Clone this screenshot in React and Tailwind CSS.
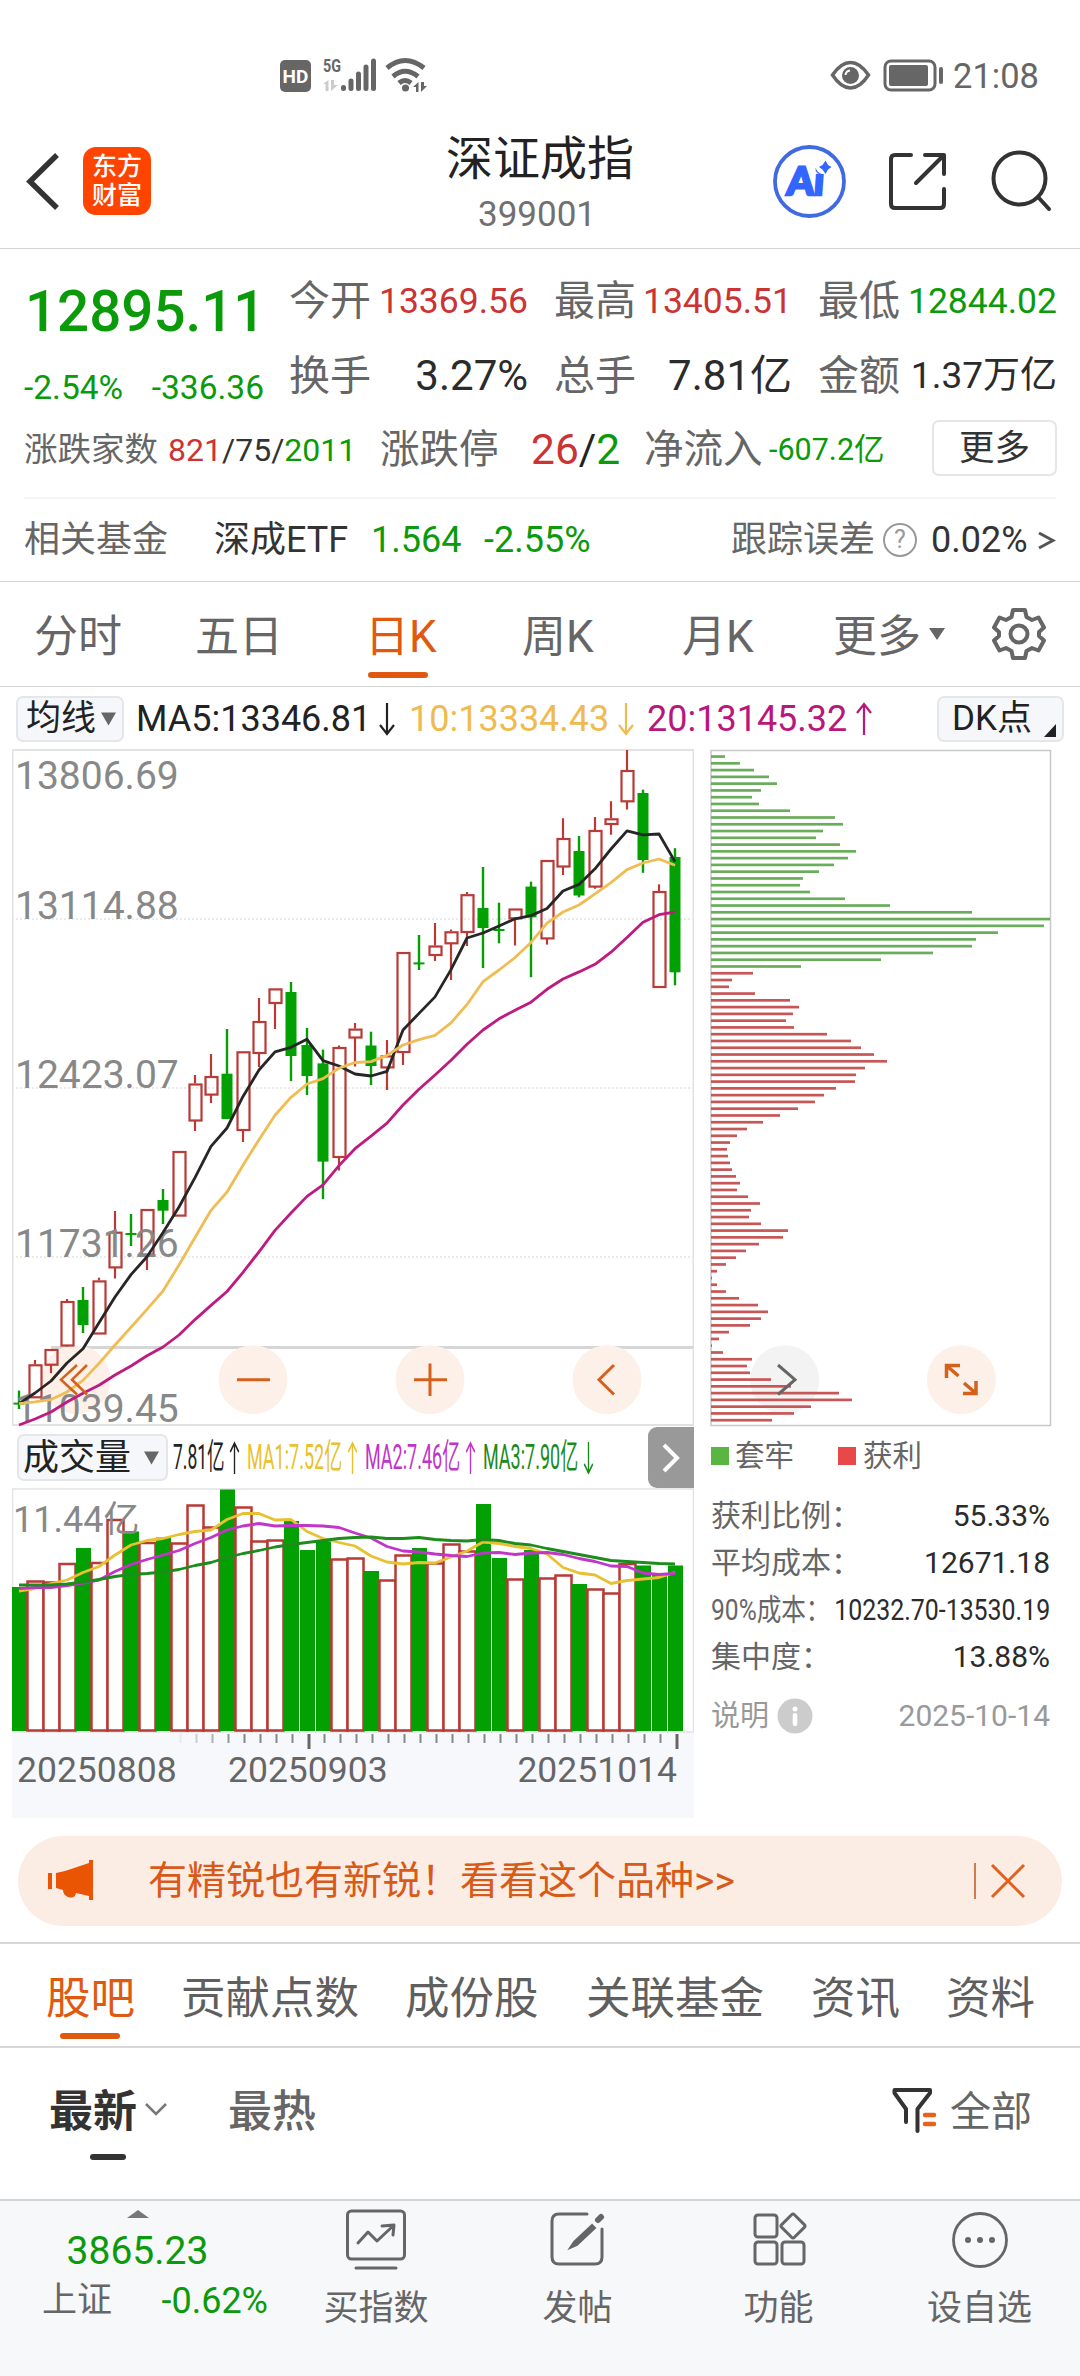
import React from 'react';

// [high, body top, body bottom, low, direction], px from the top of the chart
const candles = [
  [640.6, 653.6, 653.6, 659, 'd'], [610, 614.3, 647.3, 647.3, 'u'], [599, 599, 614.7, 623.2, 'u'],
  [549, 551, 595.5, 596.4, 'u'], [537, 550, 575, 583, 'd'], [527.7, 530.4, 583.5, 583.5, 'u'],
  [461, 481.7, 517.4, 528.6, 'u'], [464, 484, 484, 496, 'd'], [459, 459, 504.5, 520, 'u'],
  [439, 450, 460.7, 474, 'd'], [401, 401, 465.6, 465.6, 'u'], [325, 333.5, 370.5, 381, 'u'],
  [304, 326, 344.6, 353, 'u'], [279, 323.7, 369, 369, 'd'], [301.3, 301.3, 380, 392, 'u'],
  [248, 271, 303, 317, 'u'], [238.4, 238.4, 253, 279, 'u'], [232, 242, 306, 331, 'd'],
  [278, 295, 326, 345, 'd'], [299.6, 313.4, 411.6, 449, 'd'], [295.5, 297, 407, 420.5, 'u'],
  [273, 278.6, 287.5, 316.5, 'u'], [281.7, 295.5, 316, 335, 'd'], [290, 305.4, 317.4, 340, 'u'],
  [202, 202, 302, 315, 'u'], [185, 213.4, 213.4, 220, 'd'], [173, 195.5, 205, 211, 'u'],
  [179.5, 181.3, 193.3, 230, 'u'], [142, 144.2, 182, 196, 'u'], [117, 158, 178, 218, 'd'],
  [152.7, 180, 180, 193.3, 'd'], [158.5, 158.5, 168.3, 195.5, 'u'], [131.7, 136.6, 167.4, 227.2, 'd'],
  [110, 110, 188.4, 194.6, 'u'], [68.3, 88, 116.5, 125, 'u'], [86, 101, 145.5, 147.3, 'd'],
  [67, 80, 136.6, 138.8, 'u'], [51.3, 68.3, 74, 84.8, 'u'], [0, 20, 51.3, 59.4, 'u'],
  [39.7, 43, 110, 122.8, 'd'], [134.4, 141, 237, 237, 'u'], [98.2, 107, 222.3, 235.3, 'd'],
];

const ma5 = [653.6, 643, 631, 613, 598.7, 572.8, 547, 524.6, 506.7, 482.6, 457, 427.7, 396.4, 378, 346.4, 320, 301.8, 297.3, 289.3, 310.7, 316, 324, 326, 321.4, 280, 263.4, 246.9, 219.6, 188, 183, 176, 168.8, 165.6, 158.5, 141, 134.4, 118.8, 99, 80.8, 84.8, 84, 111.6];
const ma10 = [653.6, 651.8, 649.6, 642, 630.4, 613.4, 595, 577.2, 559.4, 541, 515, 487.5, 460.3, 442, 415.2, 389.7, 365.2, 347.3, 334, 328.6, 318.3, 312.5, 311.6, 305.4, 295, 289.7, 285.3, 272.8, 254.5, 231.7, 220, 207.6, 192.4, 173.2, 162, 155, 143.8, 132.6, 119.6, 113, 109, 115.2];
const ma20 = [675, 669, 662, 652, 643.3, 635.3, 625, 616, 605.8, 597, 585, 569.6, 555.4, 541.5, 522.3, 501.8, 480.4, 463, 446.4, 434.8, 415.6, 398.7, 386.2, 373.2, 355, 339.3, 325, 310.3, 294.2, 280, 268.8, 260.3, 252.2, 239.3, 229, 221.9, 214.3, 202.2, 187.5, 172.3, 164.7, 162];

const volumes = [98, 91.5, 92.5, 74, 59, 73, 30, 42.5, 53, 48.5, 53.5, 15.5, 37.5, 0.5, 17.5, 51.5, 50.5, 32, 61, 51.5, 69.5, 68.5, 82, 90.5, 65.5, 59, 73.5, 54.5, 61.5, 15, 69, 89.5, 61, 88.5, 85.5, 95, 99.5, 103.5, 74, 76.5, 86, 76.5];
const volumeDown = [0, 4, 7, 9, 13, 17, 18, 19, 22, 25, 29, 30, 32, 35, 39, 40, 41];
const vma1 = [102, 99.5, 94.5, 91, 83.5, 77.5, 66, 56, 51.5, 49.5, 45.5, 42.5, 41, 30.5, 24.5, 24.5, 31, 30.5, 42.5, 49.5, 53.5, 57, 67, 73, 75, 73.5, 74, 68, 62, 53, 54.5, 57.5, 59.5, 65, 78.5, 84, 86, 94.5, 91.5, 90, 88.5, 83.5];
const vma2 = [99.5, 98.5, 98.5, 96.5, 94, 91, 82.5, 75.5, 70.5, 66, 61.5, 54.5, 48.5, 41, 37, 34.5, 37, 36.5, 36.5, 37, 38.5, 44, 49, 57.5, 62, 63, 65, 66.5, 67.5, 64, 63.5, 65.5, 64, 63.5, 65.5, 69.5, 72.5, 77, 77.5, 84, 85.5, 84.5];
const vma3 = [96, 96, 96, 95, 93, 90.5, 87.5, 85.5, 84.5, 83, 80.5, 76.5, 73.5, 68.5, 64.5, 61.5, 58, 55.5, 53.5, 51.5, 49.5, 48.5, 48, 49.5, 49.5, 48.5, 50.5, 51.5, 52, 50.5, 51.5, 54.5, 56, 59.5, 62.5, 65.5, 68.5, 71.5, 72.5, 73.5, 74.5, 75];

const trapped = [14, 29, 43, 58, 66, 50, 41, 48, 79, 124, 132, 112, 105, 129, 145, 137, 123, 108, 92, 89, 99, 134, 179, 261, 339, 333, 287, 265, 261, 222, 170, 90];
const profit = [42, 21, 18, 44, 79, 88, 82, 75, 83, 116, 140, 150, 163, 176, 154, 145, 144, 125, 113, 104, 87, 69, 52, 36, 26, 19, 16, 17, 19, 21, 25, 29, 26, 37, 49, 40, 38, 50, 77, 72, 48, 35, 25, 15, 6, 1, 6, 15, 28, 47, 57, 50, 39, 18, 8, 1, 12, 41, 36, 39, 60, 80, 128, 141, 100, 83, 61];

const xAt = (i) => 7 + i * 16;
const toPoints = (values) => values.map((y, i) => `${xAt(i)},${y}`).join(' ');

const Arrow = ({ up, color, width = 18, height = 34 }) => (
  <svg width={width} height={height} viewBox="0 0 18 34" preserveAspectRatio="none" fill="none" stroke={color} strokeWidth="2.2" className="shrink-0">
    {up ? <path d="M9 33V2M2 11L9 2L16 11" /> : <path d="M9 1V32M2 23L9 32L16 23" />}
  </svg>
);

const StatusBar = () => (
  <div className="flex h-[100px] shrink-0 items-start pt-[56px]">
    <svg width="160" height="38" viewBox="0 0 160 38" className="ml-[278px]">
      <rect x="2" y="4" width="31" height="32" rx="5" fill="#666" />
      <text x="17.5" y="26.5" fontSize="19" fontWeight="700" fill="#fff" textAnchor="middle">HD</text>
      <text x="45" y="15.5" fontSize="19" fontWeight="700" fill="#666" textLength="18" lengthAdjust="spacingAndGlyphs">5G</text>
      <path d="M45 28L50.5 24V35H47.5V28ZM53 24V35L60 29H56V24Z" fill="#ccc" />
      <path d="M65.5 31.5V32.5M73 25V32.5M80.5 18V32.5M88 11V32.5M95.5 5V32.5" stroke="#666" strokeWidth="5" strokeLinecap="round" />
      <path d="M109 12Q127 -3 146 12M115 20.5Q127 10 140 20.5M121 27Q127 22 133 27" stroke="#666" strokeWidth="5" fill="none" />
      <circle cx="127.5" cy="32" r="3.5" fill="#666" />
      <path d="M135 31L140.5 26V36H138V31ZM143 26V36L149 30H146V26Z" fill="#666" />
    </svg>
    <svg width="120" height="38" viewBox="0 0 120 38" className="ml-[391px]">
      <path d="M3.5 19Q12 6.5 21.5 6.5T39.5 19Q31 32 21.5 32T3.5 19Z" fill="none" stroke="#666" strokeWidth="3.5" />
      <circle cx="21.5" cy="19.5" r="8.5" fill="#666" />
      <path d="M16.5 19Q17 15 21 14.5" stroke="#fff" strokeWidth="2" fill="none" />
      <rect x="56" y="5" width="50" height="29" rx="6" fill="none" stroke="#666" strokeWidth="3" />
      <rect x="60" y="9" width="39" height="21" rx="2" fill="#666" />
      <rect x="110" y="11" width="4" height="17" rx="2" fill="#666" />
    </svg>
    <span className="ml-[4px] mt-[1px] text-[34.5px] leading-[38px] text-[#666]">21:08</span>
  </div>
);

const Header = () => (
  <div className="flex h-[149px] shrink-0 items-start border-b border-[#d4d4d4]">
    <div className="flex w-[360px] items-center pt-[47px] pl-[24px]">
      <svg width="36" height="68" viewBox="0 0 36 68" fill="none" stroke="#333" strokeWidth="5.5">
        <path d="M33 8L6 34.5L33 61" />
      </svg>
      <div className="ml-[23px] flex h-[68px] w-[68px] flex-col items-center justify-center rounded-[13px] bg-[#ff4400] text-[25px] font-medium leading-[29px] text-white">
        <span>东方</span>
        <span>财富</span>
      </div>
    </div>
    <div className="flex w-[360px] flex-col items-center pt-[33px]">
      <h1 className="text-[47px] leading-[52px] text-[#222]">深证成指</h1>
      <span className="mt-[12px] -ml-[6px] text-[35px] leading-[36px] text-[#707070]">399001</span>
    </div>
    <div className="flex w-[360px] pt-[43px] pl-[51px]">
      <svg width="76" height="76" viewBox="0 0 76 76">
        <circle cx="38.5" cy="38.5" r="34.5" fill="none" stroke="#4169e1" strokeWidth="3.8" />
        <text x="16" y="52.5" fontSize="39" fontWeight="900" fill="#3366ff" stroke="#3366ff" strokeWidth="2.5" className="font-['Lato']" transform="skewX(-4) translate(3 0)" textLength="37" lengthAdjust="spacingAndGlyphs">Ai</text>
        <circle cx="52.5" cy="23" r="8" fill="#fff" />
        <path d="M54.5 17.5L57 22L60.5 24L57 26.5L54.5 31L51.5 26.5L48 24L51.5 22Z" fill="#3366ff" />
      </svg>
      <svg width="64" height="76" viewBox="0 0 64 76" className="ml-[38px]" fill="none" stroke="#333" strokeWidth="4" strokeLinecap="round" strokeLinejoin="round">
        <path d="M26 12H10Q6 12 6 16V61Q6 65 10 65H55Q59 65 59 61V46M40 12H59V31M59 12L31 40" />
      </svg>
      <svg width="68" height="76" viewBox="0 0 68 76" className="ml-[38px]" fill="none" stroke="#333" strokeWidth="4" strokeLinecap="round">
        <circle cx="32.5" cy="35.5" r="26" />
        <path d="M51 54L62 66" />
      </svg>
    </div>
  </div>
);

const Quote = () => (
  <div className="flex h-[333px] shrink-0 flex-col border-b border-[#d4d4d4] whitespace-nowrap">
    <div className="flex h-[156px]">
      <div className="w-[265px] pt-[32px] pl-[25px] text-[#0a9a0a]">
        <div className="text-[56.5px] font-medium leading-[63px]">12895.11</div>
        <div className="mt-[26px] -ml-[1px] flex justify-between pr-[1px] text-[33.5px] leading-[36px]">
          <span>-2.54%</span>
          <span>-336.36</span>
        </div>
      </div>
      <div className="flex flex-col gap-[35px] pt-[32px] pl-[24px] text-[41px] leading-[40px] text-[#666]">
        <div className="flex gap-[26px]">
          <div className="flex w-[239px] items-center justify-between"><span>今开</span><span className="text-[35.5px] text-[#cc3333]">13369.56</span></div>
          <div className="flex w-[238px] items-center justify-between"><span>最高</span><span className="text-[35.5px] text-[#cc3333]">13405.51</span></div>
          <div className="flex w-[239px] items-center justify-between"><span>最低</span><span className="text-[35.5px] text-[#0a9a0a]">12844.02</span></div>
        </div>
        <div className="flex gap-[26px]">
          <div className="flex w-[239px] items-center justify-between"><span>换手</span><span className="text-[42px] text-[#2b2b2b]">3.27%</span></div>
          <div className="flex w-[238px] items-center justify-between"><span>总手</span><span className="text-[42px] text-[#2b2b2b]">7.81亿</span></div>
          <div className="flex w-[239px] items-center justify-between"><span>金额</span><span className="text-[37px] text-[#2b2b2b]">1.37万亿</span></div>
        </div>
      </div>
    </div>
    <div className="mt-[15px] flex h-[56px] items-center pl-[24px] text-[#666]">
      <span className="mt-[4px] w-[144px] text-[33.5px]">涨跌家数</span>
      <span className="mt-[3px] w-[212px] text-[32px] text-[#333]"><span className="text-[#cc3333]">821</span>/75/<span className="text-[#0a9a0a]">2011</span></span>
      <span className="mt-[4px] w-[151px] text-[39.5px]">涨跌停</span>
      <span className="mt-[4px] w-[113px] text-[42.5px] text-[#222]"><span className="text-[#cc3333]">26</span>/<span className="text-[#0a9a0a]">2</span></span>
      <span className="mt-[4px] w-[125px] text-[39.5px]">净流入</span>
      <span className="mt-[3px] w-[163px] text-[30.5px] text-[#0a9a0a]">-607.2亿</span>
      <button className="h-[56px] w-[125px] rounded-[7px] border-2 border-[#e6e6e6] text-[35.5px] leading-[52px] text-[#333]">更多</button>
    </div>
    <div className="mx-[24px] mt-[21px] h-[2px] bg-[#f4f4f4]"></div>
    <div className="flex h-[82px] items-center pl-[24px] text-[36px] text-[#666]">
      <span className="w-[190px]">相关基金</span>
      <span className="w-[157px] text-[#333]">深成ETF</span>
      <span className="w-[113px] text-[#0a9a0a]">1.564</span>
      <span className="w-[247px] text-[#0a9a0a]">-2.55%</span>
      <span className="w-[152px]">跟踪误差</span>
      <span className="flex h-[34px] w-[34px] items-center justify-center rounded-full border-[2.5px] border-[#999] text-[25px] text-[#999]">?</span>
      <span className="ml-[14px] w-[107px] text-[36px] text-[#333]">0.02%</span>
      <svg width="18" height="26" viewBox="0 0 18 26" fill="none" stroke="#555" strokeWidth="3"><path d="M1 6L15 13.5L1 21" /></svg>
    </div>
  </div>
);

const ChartTabs = () => (
  <div className="flex h-[105px] shrink-0 items-center border-b border-[#d4d4d4] pt-[5px] pl-[34px] text-[44px] leading-[50px] whitespace-nowrap text-[#666]">
    <span className="w-[161px]">分时</span>
    <span className="w-[170px]">五日</span>
    <span className="w-[157px] text-[#df5a10]">日K</span>
    <span className="w-[160px]">周K</span>
    <span className="w-[151px]">月K</span>
    <span>更多</span>
    <svg width="16" height="14" viewBox="0 0 16 14" className="mb-[5px] ml-[8px]"><path d="M0 1H16L8 13Z" fill="#666" /></svg>
    <svg width="54" height="54" viewBox="0 0 54 54" className="mb-[5px] ml-[47px]" fill="none" stroke="#666" strokeWidth="4" strokeLinejoin="round">
      <path d="M21 3H33L34.5 10L40 13L46.5 10.5L52 20.5L47 25V29L52 33.5L46.5 43.5L40 41L34.5 44L33 51H21L19.5 44L14 41L7.5 43.5L2 33.5L7 29V25L2 20.5L7.5 10.5L14 13L19.5 10Z" />
      <circle cx="27" cy="27" r="8.5" />
    </svg>
  </div>
);

const MaRow = () => (
  <div className="flex h-[62px] shrink-0 items-center pt-[1px] pl-[16px] text-[36px] leading-[44px] whitespace-nowrap">
    <div className="flex h-[46px] w-[108px] items-center rounded-[7px] border-2 border-[#e4e6ea] bg-[#f6f7fa] pl-[8px] text-[35px] text-[#222]">
      均线
      <svg width="15" height="14" viewBox="0 0 16 14" className="ml-[5px]"><path d="M0 0H16L8 14Z" fill="#666" /></svg>
    </div>
    <span className="ml-[12px] w-[242px] text-[#222]">MA5:13346.81</span>
    <Arrow color="#222" />
    <span className="ml-[13px] w-[208px] text-[#efbb50]">10:13334.43</span>
    <Arrow color="#efbb50" />
    <span className="ml-[12px] w-[208px] text-[#b8177c]">20:13145.32</span>
    <Arrow up color="#b8177c" />
    <div className="ml-[64px] flex h-[46px] w-[127px] items-center rounded-[7px] border-2 border-[#e4e6ea] bg-[#f6f7fa] pl-[13px] text-[35px] text-[#222]">
      DK点
      <svg width="12" height="13" viewBox="0 0 12 13" className="mt-[24px] ml-[12px]"><path d="M12 0V13H0Z" fill="#222" /></svg>
    </div>
  </div>
);

const RED = '#b93a36';
const GREEN = '#03a003';

const KLine = () => (
  <svg width="683" height="678" viewBox="0 -1 683 678" className="block">
    <rect x="0.5" y="0" width="681" height="675" fill="none" stroke="#e2e2e2" strokeWidth="2" />
    {[169, 338, 507].map((y) => (
      <line key={y} x1="0" x2="681" y1={y} y2={y} stroke="#e4e4e4" strokeWidth="1.5" strokeDasharray="2 2" />
    ))}
    <line x1="39" x2="681" y1="597.5" y2="597.5" stroke="#d6d6d6" strokeWidth="3" />
    {[64, 241, 418, 595].map((x) => (
      <circle key={x} cx={x} cy="629.7" r="34.5" fill="#fdf0e8" />
    ))}
    {candles.map(([high, top, bottom, low, dir], i) => {
      const x = xAt(i);
      if (dir === 'd') {
        return (
          <g key={i} fill={GREEN}>
            <rect x={x - 1.2} y={high} width="2.4" height={low - high} />
            <rect x={x - 5.5} y={bottom - top < 1 ? top - 1 : top} width="11" height={Math.max(bottom - top, 2)} />
          </g>
        );
      }
      return (
        <g key={i} fill="none" stroke={RED} strokeWidth="2.2">
          <path d={`M${x} ${high}V${top}M${x} ${bottom}V${low}`} />
          <rect x={x - 5.5} y={top + 1} width="12" height={Math.max(bottom - top - 1, 2)} />
        </g>
      );
    })}
    <g fontSize="39" fill="#888">
      <text x="3" y="38.5">13806.69</text>
      <text x="3" y="169">13114.88</text>
      <text x="3" y="338">12423.07</text>
      <text x="3" y="507">11731.26</text>
      <text x="3" y="672">11039.45</text>
    </g>
    <g fill="none" strokeWidth="2.8" strokeLinejoin="round">
      <polyline points={toPoints(ma5)} stroke="#262626" />
      <polyline points={toPoints(ma10)} stroke="#f0bc54" />
      <polyline points={toPoints(ma20)} stroke="#be1b80" />
    </g>
    <g fill="none" stroke="#d4601c" strokeWidth="3">
      <path d="M65 615L49 629.7L65 644.5M75 615L60 629.7L75 644.5" strokeWidth="2.5" />
      <path d="M225 629.7H258" />
      <path d="M402 629.7H435M418 613.5V646" />
      <path d="M602 615L587 629.7L602 644.5" />
    </g>
  </svg>
);

const VolumeRow = () => (
  <div className="flex h-[61px] items-center pl-[5px] whitespace-nowrap">
    <div className="flex h-[47px] w-[151px] shrink-0 items-center rounded-[7px] border-2 border-[#e4e6ea] bg-[#f6f7fa] pl-[4px] text-[36px] leading-[42px] text-[#222]">
      成交量
      <svg width="15" height="14" viewBox="0 0 16 14" className="ml-[13px]"><path d="M0 0H16L8 14Z" fill="#666" /></svg>
    </div>
    <div className="flex items-center pl-[5px] text-[35px] leading-[40px]">
      <div className="w-[56px] text-[#222]"><span className="inline-block origin-left scale-x-[0.5]">7.81亿</span></div>
      <Arrow up color="#222" width={11} />
      <div className="ml-[7px] w-[100px] text-[#e8c12c]"><span className="inline-block origin-left scale-x-[0.514]">MA1:7.52亿</span></div>
      <Arrow up color="#e8c12c" width={11} />
      <div className="ml-[7px] w-[100px] text-[#c034c8]"><span className="inline-block origin-left scale-x-[0.514]">MA2:7.46亿</span></div>
      <Arrow up color="#c034c8" width={11} />
      <div className="ml-[7px] w-[100px] text-[#1a8a1a]"><span className="inline-block origin-left scale-x-[0.514]">MA3:7.90亿</span></div>
      <Arrow color="#1a8a1a" width={11} />
    </div>
    <div className="ml-auto flex h-[61px] w-[46px] shrink-0 items-center justify-center rounded-l-[9px] bg-[#999]">
      <svg width="20" height="32" viewBox="0 0 20 32" fill="none" stroke="#fff" strokeWidth="4"><path d="M3 3L16 16L3 29" /></svg>
    </div>
  </div>
);

const VolumeChart = () => (
  <svg width="683" height="330" viewBox="0 -1 683 330" className="block">
    <rect x="0" y="244" width="682" height="85" fill="#f7f8fb" />
    <rect x="0.5" y="0" width="681" height="243" fill="none" stroke="#e2e2e2" strokeWidth="1.5" />
    {volumes.map((y, i) =>
      volumeDown.includes(i) ? (
        <rect key={i} x={xAt(i) - 7} y={y} width="15" height={242 - y} fill={GREEN} />
      ) : (
        <rect key={i} x={xAt(i) - 7.5} y={y + 1} width="16" height={240.5 - y} fill="#fff" stroke={RED} strokeWidth="2.5" />
      )
    )}
    <text x="1" y="43" fontSize="36" fill="#888">11.44亿</text>
    <g fill="none" strokeWidth="2.8" strokeLinejoin="round">
      <polyline points={toPoints(vma1)} stroke="#e8c133" />
      <polyline points={toPoints(vma2)} stroke="#c136c8" />
      <polyline points={toPoints(vma3)} stroke="#1d8c1d" />
    </g>
    {Array.from({ length: 32 }, (_, n) => n + 10).map((i) => {
      const major = i === 18 || i === 41;
      return (
        <rect key={i} x={xAt(i) + 0.5} y="245" width={major ? 3 : 2} height={major ? 15 : 9} fill={major ? '#666' : '#888'} opacity={Math.min(1, (i - 9.5) / 4)} />
      );
    })}
    <g fontSize="35.5" fill="#666">
      <text x="5" y="292.5">20250808</text>
      <text x="216" y="292.5">20250903</text>
      <text x="665" y="292.5" textAnchor="end">20251014</text>
    </g>
  </svg>
);

const ChipChart = () => (
  <svg width="342" height="678" viewBox="0 -1 342 678" className="block">
    <rect x="1" y="0.5" width="339.5" height="675" fill="none" stroke="#c8c8c8" strokeWidth="1.5" />
    <circle cx="74.7" cy="629.7" r="34.5" fill="#f3f3f3" />
    {trapped.map((w, i) => (
      <rect key={i} x="1" y={5.2 + i * 6.772} width={w} height="2.7" fill="#69ad5b" />
    ))}
    {profit.map((w, i) => (
      <rect key={i} x="1" y={5.2 + (i + 32) * 6.772} width={w} height="2.7" fill="#c75656" />
    ))}
    <path d="M68 615L85 629.7L68 644.5" fill="none" stroke="#666" strokeWidth="3" />
    <circle cx="251.3" cy="629.7" r="34.5" fill="#fdf0e8" />
    <g fill="none" stroke="#d4601c" strokeWidth="3.5">
      <path d="M236.5 628V615.5H250M237 616L248.5 626M266 631V643.5H253M265.5 643L254 633" />
    </g>
  </svg>
);

const ChipStats = () => (
  <div className="flex flex-col whitespace-nowrap text-[30px] leading-[40px] text-[#666]">
    <div className="mt-[8px] flex h-[42px] items-center">
      <span className="ml-[1px] h-[18px] w-[18px] bg-[#59b643]"></span>
      <span className="ml-[6px] w-[103px] text-[29.5px]">套牢</span>
      <span className="h-[18px] w-[18px] bg-[#e84848]"></span>
      <span className="ml-[7px] text-[29.5px]">获利</span>
    </div>
    <div className="mt-[15px] flex h-[47px] w-[340px] items-center justify-between"><span className="pl-[1px]">获利比例：</span><span className="text-[#2b2b2b]">55.33%</span></div>
    <div className="flex h-[47px] w-[340px] items-center justify-between"><span className="pl-[1px]">平均成本：</span><span className="text-[#2b2b2b]">12671.18</span></div>
    <div className="flex h-[47px] w-[340px] items-center justify-between pl-[1px]">
      <div className="w-[119px]"><span className="inline-block origin-left scale-x-[0.82]">90%成本：</span></div>
      <div className="flex w-[218px] justify-end text-[#2b2b2b]"><span className="inline-block origin-right scale-x-[0.83]">10232.70-13530.19</span></div>
    </div>
    <div className="flex h-[47px] w-[340px] items-center justify-between"><span className="pl-[1px]">集中度：</span><span className="text-[#2b2b2b]">13.88%</span></div>
    <div className="mt-[13px] flex h-[46px] w-[340px] items-center text-[#999]">
      <span className="pl-[1px] text-[29px]">说明</span>
      <svg width="36" height="36" viewBox="0 0 36 36" className="ml-[8px]">
        <circle cx="18" cy="18" r="17.5" fill="#ccc" />
        <circle cx="18" cy="11" r="2.5" fill="#fff" />
        <rect x="15.7" y="15" width="4.6" height="13" rx="2" fill="#fff" />
      </svg>
      <span className="ml-auto">2025-10-14</span>
    </div>
  </div>
);

const Banner = () => (
  <div className="mx-[18px] mt-[18px] flex h-[90px] shrink-0 items-center rounded-full bg-[#fbede4] text-[39px] text-[#d85a18]">
    <svg width="48" height="42" viewBox="0 0 48 42" className="ml-[29px]" fill="#ea5504">
      <rect x="1" y="13" width="4" height="16" />
      <path d="M9 13L18 11L42 3V0H46V40H42V36L29 33Q28 39 21 37Q16 35 16 30L9 28Z" />
    </svg>
    <span className="ml-[53px] whitespace-nowrap">有精锐也有新锐！看看这个品种&gt;&gt;</span>
    <div className="ml-auto h-[36px] w-[2px] bg-[#cf7c50]"></div>
    <svg width="36" height="36" viewBox="0 0 36 36" className="mr-[36px] ml-[14px]" fill="none" stroke="#e0601c" strokeWidth="3">
      <path d="M2 2L34 34M34 2L2 34" />
    </svg>
  </div>
);

const InfoTabs = () => (
  <div className="mt-[16px] flex h-[106px] shrink-0 items-center border-y-2 border-[#d8d8d8] pt-[7px] pl-[46px] text-[44.5px] leading-[52px] whitespace-nowrap text-[#5f5f5f]">
    <div className="w-[135px] text-[#df5a10]">股吧</div>
    <div className="w-[224px]">贡献点数</div>
    <div className="w-[181px]">成份股</div>
    <div className="w-[225px]">关联基金</div>
    <div className="w-[135px]">资讯</div>
    <div>资料</div>
  </div>
);

const SortRow = () => (
  <div className="flex h-[151px] shrink-0 flex-col">
    <div className="mt-[34px] flex h-[56px] items-center text-[44px] leading-[52px] whitespace-nowrap text-[#666]">
      <span className="mt-[4px] ml-[49px] font-bold text-[#333]">最新</span>
      <svg width="24" height="14" viewBox="0 0 24 14" className="ml-[7px]" fill="none" stroke="#777" strokeWidth="2.5"><path d="M2 1L12 11L22 1" /></svg>
      <span className="mt-[4px] ml-[60px] font-medium">最热</span>
      <svg width="46" height="48" viewBox="0 0 46 48" className="ml-auto" fill="none" stroke="#333" strokeWidth="4" strokeLinejoin="round" strokeLinecap="round">
        <path d="M14 36V23L2.5 7V4H38V7L25.5 23V45" />
        <path d="M33 29H42M33 38H42" stroke="#e8621c" strokeWidth="4.5" />
      </svg>
      <span className="mt-[3px] mr-[48px] ml-[12px] text-[41px]">全部</span>
    </div>
    <div className="mt-[16px] ml-[90px] h-[6px] w-[36px] rounded-full bg-[#333]"></div>
  </div>
);

const BottomNav = () => (
  <div className="flex h-[177px] shrink-0 border-t-2 border-[#d4d4d4] bg-[#f7f8fa] text-[35px] leading-[40px] whitespace-nowrap text-[#666]">
    <div className="flex w-[275px] flex-col items-center">
      <svg width="22" height="8" viewBox="0 0 22 8" className="mt-[9px]"><path d="M11 0L22 8H0Z" fill="#777" /></svg>
      <span className="mt-[12px] text-[39px] leading-[42px] text-[#0a9a0a]">3865.23</span>
      <div className="mt-[9px] ml-[42px] flex w-[226px] items-center justify-between self-start">
        <span>上证</span>
        <span className="text-[36px] text-[#0a9a0a]">-0.62%</span>
      </div>
    </div>
    <div className="flex w-[202px] flex-col items-center pt-[6px]">
      <svg width="64" height="64" viewBox="0 0 64 64" fill="none" stroke="#666" strokeWidth="3" strokeLinejoin="round" strokeLinecap="round">
        <rect x="3.5" y="4" width="57" height="48" rx="4" />
        <path d="M12 61H52" />
        <path d="M14 36L24 25L33 34L49 19M38 19L50 18L49 28" />
      </svg>
      <span className="mt-[18px]">买指数</span>
    </div>
    <div className="flex w-[201px] flex-col items-center pt-[6px]">
      <svg width="64" height="64" viewBox="0 0 64 64" fill="none" stroke="#666" strokeWidth="3" strokeLinecap="round">
        <path d="M41 7H13Q6 7 6 14V50Q6 57 13 57H49Q56 57 56 50V22" />
        <path d="M46 18L28 35L24 41L31 38L49 21Z" fill="#666" strokeWidth="2" />
        <path d="M52 13L55 10" strokeWidth="6" />
      </svg>
      <span className="mt-[18px]">发帖</span>
    </div>
    <div className="flex w-[201px] flex-col items-center pt-[6px]">
      <svg width="64" height="64" viewBox="0 0 64 64" fill="none" stroke="#666" strokeWidth="3">
        <rect x="8" y="8" width="22" height="22" rx="3" />
        <rect x="8" y="35" width="22" height="22" rx="3" />
        <rect x="35" y="35" width="22" height="22" rx="3" />
        <rect x="37" y="10" width="18" height="18" rx="2" transform="rotate(45 46 19)" />
      </svg>
      <span className="mt-[18px]">功能</span>
    </div>
    <div className="flex w-[201px] flex-col items-center pt-[6px]">
      <svg width="64" height="64" viewBox="0 0 64 64" fill="none" stroke="#666" strokeWidth="2.8">
        <circle cx="32" cy="33" r="26.5" />
        <g fill="#666" stroke="none">
          <circle cx="20" cy="33" r="3" />
          <circle cx="32" cy="33" r="3" />
          <circle cx="44" cy="33" r="3" />
        </g>
      </svg>
      <span className="mt-[18px]">设自选</span>
    </div>
  </div>
);

const App = () => {
  return (
    <div className="flex h-[2376px] w-[1080px] flex-col overflow-hidden bg-white font-['Roboto','Noto_Sans_CJK_SC',sans-serif]">
      <StatusBar />
      <Header />
      <Quote />
      <div className="relative">
        <ChartTabs />
        <div className="absolute top-[90px] left-[368px] h-[6px] w-[60px] rounded-full bg-[#df5a10]"></div>
      </div>
      <MaRow />
      <div className="flex h-[1069px] shrink-0 pl-[12px]">
        <div className="w-[682px] overflow-hidden">
          <KLine />
          <VolumeRow />
          <VolumeChart />
        </div>
        <div className="ml-[16px]">
          <ChipChart />
          <ChipStats />
        </div>
      </div>
      <Banner />
      <div className="relative">
        <InfoTabs />
        <div className="absolute bottom-[9px] left-[60px] h-[6px] w-[60px] rounded-full bg-[#df5a10]"></div>
      </div>
      <SortRow />
      <BottomNav />
    </div>
  );
};

export default App;
